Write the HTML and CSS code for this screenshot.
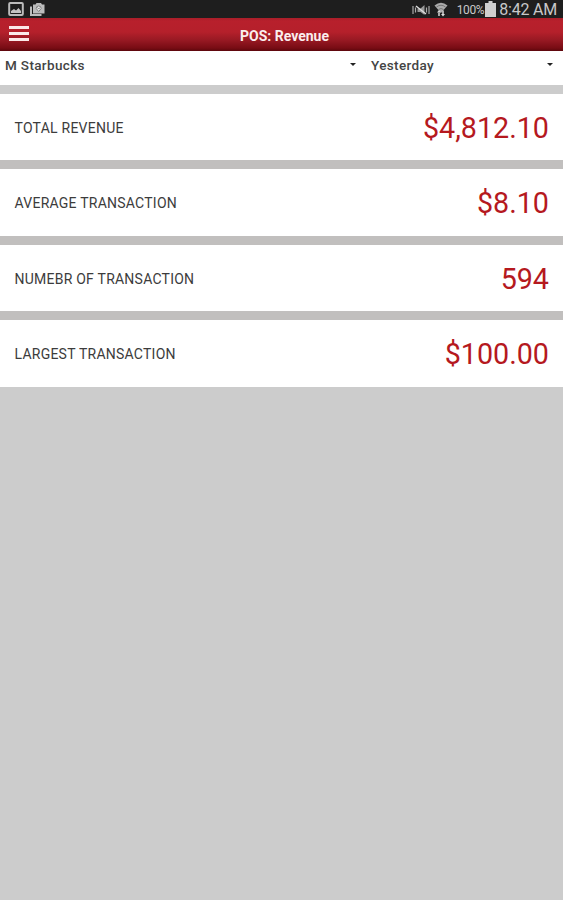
FILE: index.html
```html
<!DOCTYPE html>
<html lang="en">
<head>
    <meta charset="UTF-8">
    <meta name="viewport" content="width=device-width, initial-scale=1.0">
    <title>POS: Revenue</title>
    <link rel="stylesheet" href="styles.css">
</head>
<body>
    <div class="status-bar">
        <div class="status-left">
            <svg class="icon-image" width="16" height="14" viewBox="0 0 16 14">
                <rect x="1.200" y="1" width="13.600" height="12" rx="1" fill="none" stroke="#bcbcbc" stroke-width="2"/>
                <path d="M3 11V9l3-2 2 1.500 2.500-2.500L13 9v2z" fill="#c4c4c4"/>
            </svg>
            <svg class="icon-camera" width="15" height="14" viewBox="0 0 15 14">
                <path d="M1 4.500V13h10.500" fill="none" stroke="#bcbcbc" stroke-width="2"/>
                <path d="M3 2.500h2.500L6.500 1h4.500l1 1.500h2.500v9H3z" fill="#bcbcbc"/>
                <path d="M8.700 9.500L6.200 6.500a2.500 2.500 0 1 1 5 0z" fill="#e8e8e8" stroke="#777" stroke-width=".9"/>
                <path d="M7.500 5.500l1.200 1.500 1.300-1.500" fill="none" stroke="#888"/>
            </svg>
        </div>
        <div class="status-right">
            <svg class="icon-mute" width="18" height="12" viewBox="0 0 18 12">
                <path d="M1 2v8M17 2v8M14.500 3.500v5M3.500 3.500v5" stroke="#aaa" stroke-width="1.200"/>
                <path d="M5.500 4.500h3L12.500 1v10l-4-3h-3z" fill="#999"/>
                <path d="M4 2l10 8" stroke="#ddd" stroke-width="1.500"/>
            </svg>
            <svg class="icon-wifi" width="14" height="15" viewBox="0 0 14 15">
                <path d="M0.500 3.500Q7-1.800 13.500 3.500L7 11z" fill="#aaa"/>
                <path d="M2.500 5Q7 1.500 11.500 5M4.500 7.500Q7 5.500 9.500 7.500" fill="none" stroke="#666" stroke-width=".8"/>
                <path d="M3 10.500l2-2.500 2 2.500zM7 12h4l-2 2.500z" fill="#ddd"/>
                <path d="M4.200 10.500h1.600V14H4.200zM8.200 8.500h1.600V12H8.200z" fill="#ccc"/>
            </svg>
            <span class="battery-level">100%</span>
            <svg class="icon-battery" width="11" height="16" viewBox="0 0 11 16">
                <path d="M3.500 0h4v2H11v14H0V2h3.500z" fill="#cfcfcf"/>
            </svg>
            <span class="clock">8:42 AM</span>
        </div>
    </div>

    <header class="header">
        <button class="menu-button" aria-label="Menu">
            <span></span>
            <span></span>
            <span></span>
        </button>
        <h1 class="title">POS: Revenue</h1>
    </header>

    <div class="filters">
        <div class="filter filter-store">
            <span>M Starbucks</span>
            <i class="caret"></i>
        </div>
        <div class="filter filter-date">
            <span>Yesterday</span>
            <i class="caret"></i>
        </div>
    </div>

    <main class="cards">
        <div class="card">
            <span class="label">TOTAL REVENUE</span>
            <span class="value">$4,812.10</span>
        </div>
        <div class="card">
            <span class="label">AVERAGE TRANSACTION</span>
            <span class="value">$8.10</span>
        </div>
        <div class="card">
            <span class="label">NUMEBR OF TRANSACTION</span>
            <span class="value">594</span>
        </div>
        <div class="card">
            <span class="label">LARGEST TRANSACTION</span>
            <span class="value">$100.00</span>
        </div>
    </main>
</body>
</html>
```
FILE: styles.css
```css
* {
    margin: 0;
    padding: 0;
    box-sizing: border-box;
    font-family: Roboto, "Open Sans", sans-serif;
}

body {
    min-height: 100vh;
    background: #ccc;
}

svg {
    display: block;
    flex-shrink: 0;
}

/* Device status bar */
.status-bar {
    height: 18px;
    padding: 0 6px 0 8px;
    background: #1e1e1e;
    display: flex;
    align-items: center;
    justify-content: space-between;
    color: #c8c8c8;
}

.status-left,
.status-right {
    display: flex;
    align-items: center;
}

.icon-camera {
    margin-left: 6px;
}

.icon-mute {
    margin-top: 1px;
}

.icon-wifi {
    margin-left: 4px;
}

.battery-level {
    margin-left: 9px;
    padding-top: 2px;
    font-size: 12px;
    line-height: 16px;
    letter-spacing: -0.4px;
}

.icon-battery {
    margin-left: 1px;
}

.clock {
    margin-left: 3px;
    padding-top: 2px;
    font-size: 16px;
    line-height: 16px;
    letter-spacing: -0.2px;
}

/* Header */
.header {
    height: 33px;
    padding: 0 9px;
    background: linear-gradient(#a91e29 0, #b8202c 3px, #b5202b 14px, #981923 22px, #780c14 30px, #5c070c 33px);
    display: grid;
    grid-template-columns: 20px 1fr 20px;
    align-items: center;
}

.menu-button {
    padding-bottom: 2px;
    background: none;
    border: none;
    display: flex;
    flex-direction: column;
    gap: 3px;
    cursor: pointer;
}

.menu-button span {
    width: 20px;
    height: 3px;
    background: #fbe9e9;
}

.title {
    padding: 2px 0 0 6px;
    color: #fbeeee;
    font-size: 14px;
    font-weight: 700;
    text-align: center;
}

/* Filters */
.filters {
    height: 34px;
    background: #fff;
    display: flex;
}

.filter {
    padding: 5px 10px 0 5px;
    display: flex;
    justify-content: space-between;
    color: #444;
    font-size: 13.5px;
    font-weight: 500;
    line-height: 18px;
    letter-spacing: 0.35px;
}

.filter-store {
    width: 366px;
}

.filter-date {
    flex: 1;
}

.caret {
    width: 0;
    height: 0;
    margin-top: 7px;
    border: 3px solid transparent;
    border-top: 3px solid #222;
    border-bottom: none;
}

/* Revenue cards */
.cards {
    padding-top: 8.8px;
    display: flex;
    flex-direction: column;
    gap: 8.8px;
    background: linear-gradient(#ccc 20px, #c1bfbe 20px);
}

.card {
    height: 66.6px;
    padding: 2px 14px 0 14.5px;
    background: #fff;
    display: flex;
    align-items: center;
    justify-content: space-between;
}

.label {
    color: #3c3c3c;
    font-size: 14px;
    letter-spacing: 0.24px;
}

.value {
    color: #b5191e;
    font-size: 28.7px;
    line-height: 34px;
}
```
